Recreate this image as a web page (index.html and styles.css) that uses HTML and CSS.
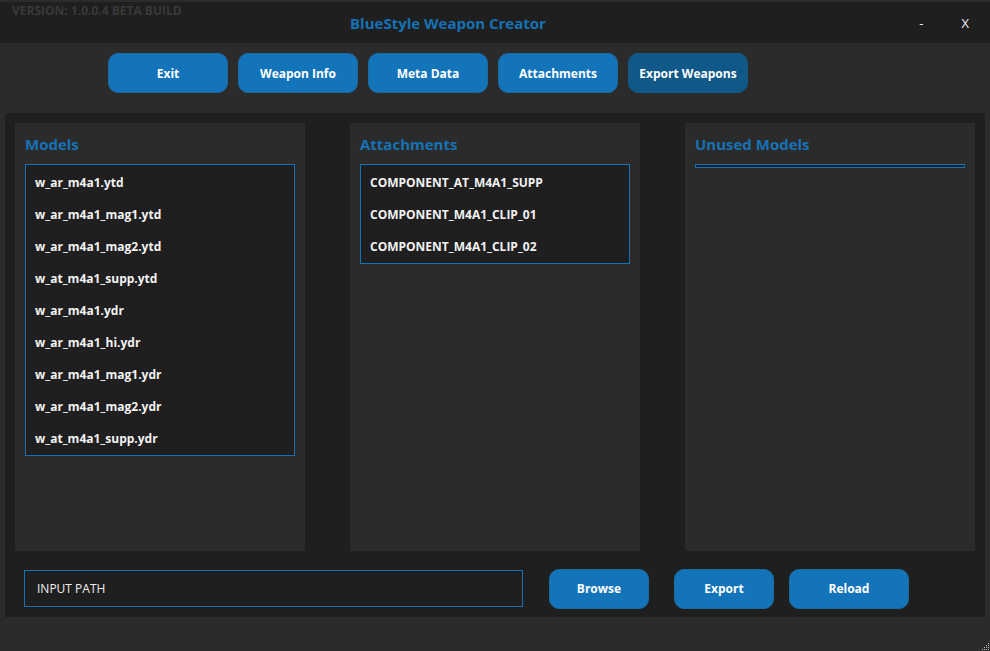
FILE: index.html
```html
<!DOCTYPE html>
<html lang="en">
<head>
    <meta charset="UTF-8">
    <title>BlueStyle Weapon Creator</title>
    <link rel="stylesheet" href="styles.css">
</head>
<body>
<div class="window">
    <div class="titlebar">
        <span class="version">VERSION: 1.0.0.4 BETA BUILD</span>
        <span class="title">BlueStyle Weapon Creator</span>
        <span class="ctrl min">-</span>
        <span class="ctrl close">X</span>
    </div>

    <div class="toolbar">
        <button class="btn">Exit</button>
        <button class="btn">Weapon Info</button>
        <button class="btn">Meta Data</button>
        <button class="btn">Attachments</button>
        <button class="btn active">Export Weapons</button>
    </div>

    <div class="main">
        <div class="panels">
            <div class="panel">
                <h2>Models</h2>
                <ul class="list">
                    <li>w_ar_m4a1.ytd</li>
                    <li>w_ar_m4a1_mag1.ytd</li>
                    <li>w_ar_m4a1_mag2.ytd</li>
                    <li>w_at_m4a1_supp.ytd</li>
                    <li>w_ar_m4a1.ydr</li>
                    <li>w_ar_m4a1_hi.ydr</li>
                    <li>w_ar_m4a1_mag1.ydr</li>
                    <li>w_ar_m4a1_mag2.ydr</li>
                    <li>w_at_m4a1_supp.ydr</li>
                </ul>
            </div>
            <div class="panel">
                <h2>Attachments</h2>
                <ul class="list">
                    <li>COMPONENT_AT_M4A1_SUPP</li>
                    <li>COMPONENT_M4A1_CLIP_01</li>
                    <li>COMPONENT_M4A1_CLIP_02</li>
                </ul>
            </div>
            <div class="panel">
                <h2>Unused Models</h2>
                <ul class="list"></ul>
            </div>
        </div>

        <div class="bottom">
            <input class="path" type="text" value="INPUT PATH">
            <button class="btn small browse">Browse</button>
            <button class="btn small export">Export</button>
            <button class="btn reload">Reload</button>
        </div>
    </div>

    <div class="footer">
        <svg class="grip" width="8" height="8" viewBox="0 0 8 8">
            <rect x="6" y="0" width="1" height="1" fill="#bbb"/>
            <rect x="4" y="2" width="1" height="1" fill="#bbb"/>
            <rect x="6" y="2" width="1" height="1" fill="#bbb"/>
            <rect x="2" y="4" width="1" height="1" fill="#bbb"/>
            <rect x="4" y="4" width="1" height="1" fill="#bbb"/>
            <rect x="6" y="4" width="1" height="1" fill="#bbb"/>
            <rect x="0" y="6" width="1" height="1" fill="#bbb"/>
            <rect x="2" y="6" width="1" height="1" fill="#bbb"/>
            <rect x="4" y="6" width="1" height="1" fill="#bbb"/>
            <rect x="6" y="6" width="1" height="1" fill="#bbb"/>
        </svg>
    </div>
</div>
</body>
</html>
```

FILE: styles.css
```css
 html, body{
     margin: 0;
     padding: 0;
     background: #2b2b2b;
 }
 body{
     font-family: "Open Sans", "Noto Sans", sans-serif;
     color: #fff;
 }
 .window{
     width: 990px;
     height: 651px;
     display: flex;
     flex-direction: column;
     background: #2b2b2b;
     position: relative;
 }

 /* title bar */
 .titlebar{
     height: 41px;
     border-top: 2px solid #2b2b2b;
     background: #1f1f1f;
     display: flex;
     align-items: center;
     position: relative;
 }
 .version{
     position: absolute;
     left: 12px;
     top: 1px;
     font-size: 12px;
     font-weight: bold;
     color: #383838;
     line-height: 16px;
 }
 .title{
     margin-left: 350px;
     font-size: 15px;
     font-weight: bold;
     color: #1572b6;
 }
 .ctrl{
     font-size: 13px;
     color: #eee;
 }
 .min{
     margin-left: auto;
 }
 .close{
     margin-left: 38px;
     margin-right: 21px;
 }

 /* toolbar */
 .toolbar{
     height: 60px;
     padding: 10px 0 0 108px;
     display: flex;
     gap: 10px;
     align-items: flex-start;
 }
 .btn{
     width: 120px;
     height: 40px;
     border: 1px solid #1b6aa3;
     border-radius: 10px;
     background-color: #1474b9;
     color: #fff;
     font-family: "Open Sans", "Noto Sans", sans-serif;
     font-size: 12px;
     font-weight: bold;
     outline: none;
     padding: 0;
 }
 .btn.active{
     background-color: #0f5887;
     border-color: #0f5887;
 }

 /* main area */
 .main{
     margin: 0 5px;
     height: 504px;
     box-sizing: border-box;
     padding: 10px 10px 0;
     background: #1f1f1f;
     display: flex;
     flex-direction: column;
 }
 .panels{
     height: 428px;
     display: grid;
     grid-template-columns: 290px 290px 290px;
     column-gap: 45px;
 }
 .panel{
     background: #2b2b2b;
     padding: 0 10px;
 }
 .panel h2{
     margin: 11px 0 10px;
     font-size: 15px;
     line-height: 20px;
     font-weight: bold;
     color: #1572b6;
 }
 .list{
     list-style: none;
     margin: 0;
     padding: 1px 0;
     border: 1px solid #1572b6;
     background: #1f1f1f;
 }
 .list li{
     padding: 2px 0 0 9px;
     line-height: 30px;
     font-size: 12px;
     font-weight: bold;
     color: #f2f2f2;
 }

 /* bottom row */
 .bottom{
     flex: 1;
     display: flex;
     align-items: center;
     padding: 9px 0 0 9px;
 }
 .path{
     width: 499px;
     height: 37px;
     box-sizing: border-box;
     border: 1px solid #1572b6;
     background: #1f1f1f;
     color: #eee;
     font-family: "Open Sans", "Noto Sans", sans-serif;
     font-size: 12px;
     padding: 0 12px;
     outline: none;
 }
 .btn.small{
     width: 100px;
 }
 .browse{
     margin-left: 26px;
 }
 .export{
     margin-left: 25px;
 }
 .reload{
     margin-left: 15px;
 }

 .footer{
     flex: 1;
     position: relative;
 }
 .grip{
     position: absolute;
     right: 0;
     bottom: 0;
 }
```
